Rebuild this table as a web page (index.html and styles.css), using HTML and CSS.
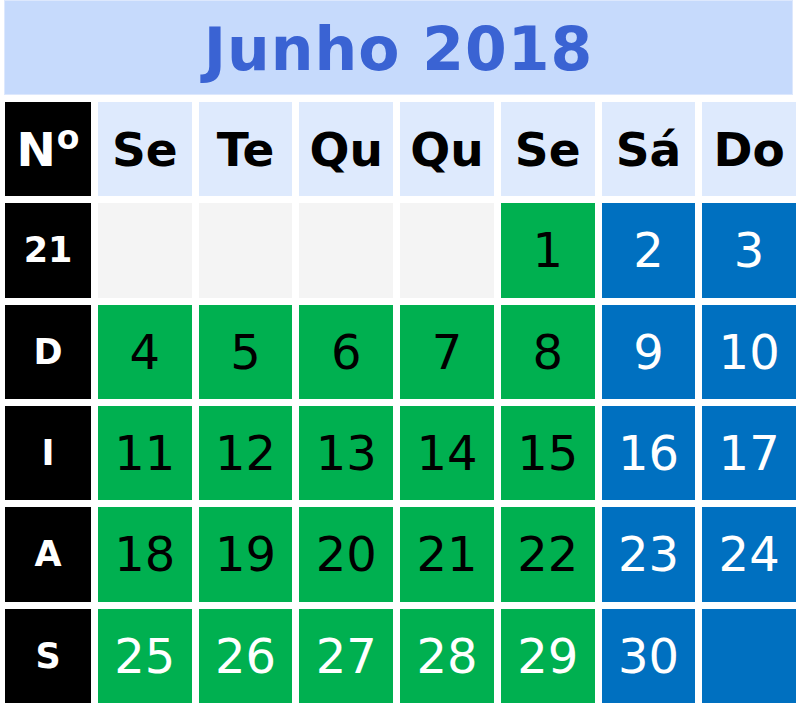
FILE: index.html
```html
<!DOCTYPE html>
<html lang="pt">
<head>
<meta charset="utf-8">
<title>Junho 2018</title>
<link rel="stylesheet" href="styles.css">
</head>
<body>
<div class="cal">
  <div class="title">Junho 2018</div>
  <div class="grid">
    <div class="lbl hd">N<span class="ord">o</span></div>
    <div class="dow">Se</div>
    <div class="dow">Te</div>
    <div class="dow">Qu</div>
    <div class="dow">Qu</div>
    <div class="dow">Se</div>
    <div class="dow">Sá</div>
    <div class="dow">Do</div>

    <div class="lbl">21</div>
    <div class="day empty"></div>
    <div class="day empty"></div>
    <div class="day empty"></div>
    <div class="day empty"></div>
    <div class="day wk">1</div>
    <div class="day we">2</div>
    <div class="day we">3</div>

    <div class="lbl">D</div>
    <div class="day wk">4</div>
    <div class="day wk">5</div>
    <div class="day wk">6</div>
    <div class="day wk">7</div>
    <div class="day wk">8</div>
    <div class="day we">9</div>
    <div class="day we">10</div>

    <div class="lbl">I</div>
    <div class="day wk">11</div>
    <div class="day wk">12</div>
    <div class="day wk">13</div>
    <div class="day wk">14</div>
    <div class="day wk">15</div>
    <div class="day we">16</div>
    <div class="day we">17</div>

    <div class="lbl">A</div>
    <div class="day wk">18</div>
    <div class="day wk">19</div>
    <div class="day wk">20</div>
    <div class="day wk">21</div>
    <div class="day wk">22</div>
    <div class="day we">23</div>
    <div class="day we">24</div>

    <div class="lbl">S</div>
    <div class="day wk light">25</div>
    <div class="day wk light">26</div>
    <div class="day wk light">27</div>
    <div class="day wk light">28</div>
    <div class="day wk light">29</div>
    <div class="day we">30</div>
    <div class="day we"></div>
  </div>
</div>
</body>
</html>
```
FILE: styles.css
```css
html, body {
  margin: 0;
  padding: 0;
  background: #ffffff;
}
body {
  font-family: "DejaVu Sans", Verdana, sans-serif;
  width: 796px;
  height: 705px;
  overflow: hidden;
}
.cal {
  padding: 1px 0 2px 5px;
  display: flex;
  flex-direction: column;
  gap: 8px;
}
.title {
  width: 787px;
  height: 93px;
  background: #c6dafc;
  box-shadow: 0 0 0 1px #dde8fd;
  color: #3a63d3;
  font-weight: bold;
  font-size: 60px;
  display: flex;
  align-items: center;
  justify-content: center;
  letter-spacing: 1px;
  padding-top: 2px;
  box-sizing: border-box;
}
.grid {
  width: 791px;
  height: 601px;
  display: grid;
  grid-template-columns: 86px repeat(7, 1fr);
  grid-template-rows: repeat(6, 1fr);
  column-gap: 7px;
  row-gap: 7px;
}
.grid > div {
  display: flex;
  align-items: center;
  justify-content: center;
}
.lbl {
  background: #000000;
  color: #ffffff;
  font-weight: bold;
  font-size: 35px;
}
.lbl.hd {
  font-size: 47px;
}
.ord {
  font-size: 33px;
  margin-top: -24px;
  margin-left: 1px;
}
.dow {
  background: #deeafd;
  color: #000000;
  font-weight: bold;
  font-size: 47px;
}
.day {
  font-size: 48px;
}
.empty {
  background: #f4f4f4;
}
.wk {
  background: #00b050;
  color: #000000;
}
.wk.light {
  color: #ffffff;
}
.we {
  background: #0070c0;
  color: #ffffff;
}
```
